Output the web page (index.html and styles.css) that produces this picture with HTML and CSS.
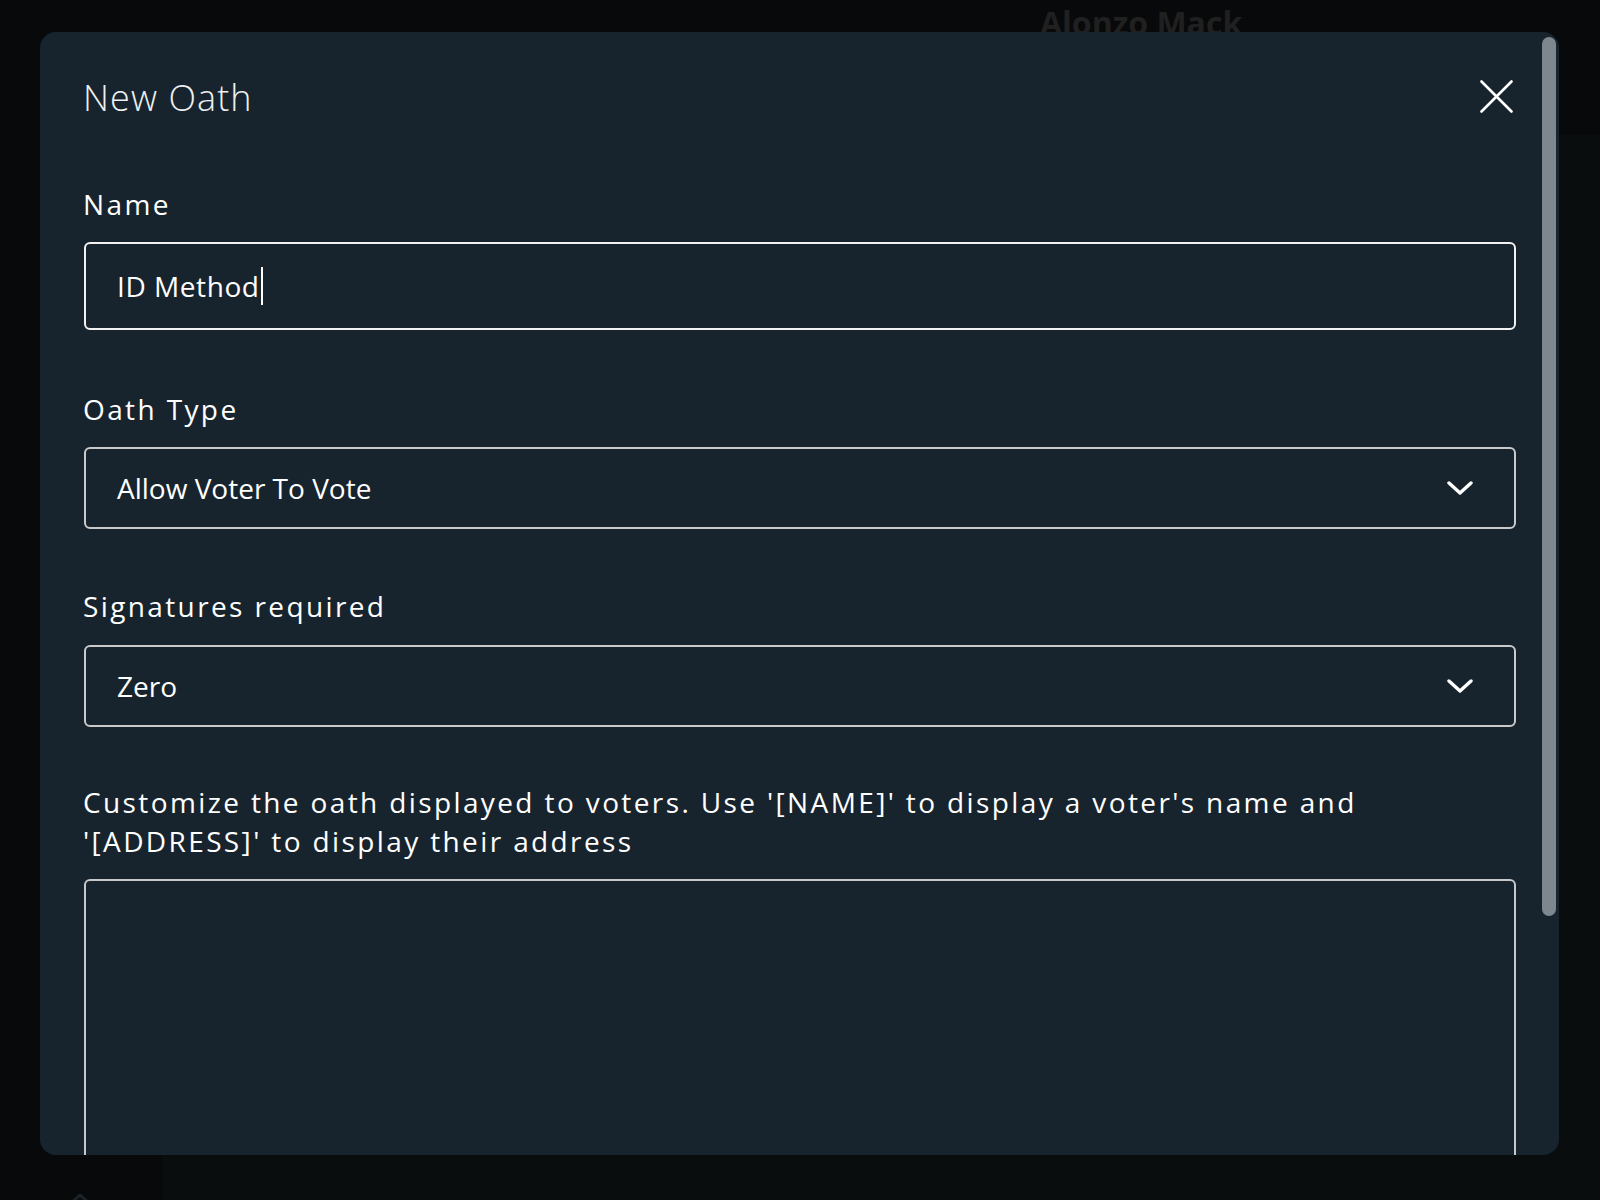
FILE: index.html
```html
<!DOCTYPE html>
<html lang="en">
<head>
<meta charset="utf-8">
<title>New Oath</title>
<link rel="stylesheet" href="styles.css">
</head>
<body>
<div class="app">
  <header class="topbar"><span class="user-name">Alonzo Mack</span></header>
  <div class="app-body">
    <aside class="sidebar">
      <svg class="side-icon" width="26" height="26" viewBox="0 0 26 26"><path d="M3 12 L13 3 L23 12 M6 10 V24 H20 V10" fill="none" stroke="#1a2327" stroke-width="3" stroke-linejoin="round"/></svg>
    </aside>
    <main class="main"></main>
  </div>
</div>

<div class="modal">
  <div class="modal-head">
    <h2 class="modal-title">New Oath</h2>
    <button class="close-btn" type="button" aria-label="Close">
      <svg width="33" height="33" viewBox="0 0 33 33"><path d="M1.5 1.5 L31.5 31.5 M31.5 1.5 L1.5 31.5" fill="none" stroke="#ffffff" stroke-width="2.6" stroke-linecap="round"/></svg>
    </button>
  </div>
  <form class="form">
    <div class="field field-name">
      <label class="field-label">Name</label>
      <div class="text-input"><span class="value">ID Method</span><span class="caret"></span></div>
    </div>
    <div class="field field-type">
      <label class="field-label">Oath Type</label>
      <div class="select"><span class="value">Allow Voter To Vote</span>
        <svg class="chevron" width="26" height="14" viewBox="0 0 26 14"><path d="M2 2 L13 12 L24 2" fill="none" stroke="#ffffff" stroke-width="3.4" stroke-linecap="round" stroke-linejoin="round"/></svg>
      </div>
    </div>
    <div class="field field-sig">
      <label class="field-label">Signatures required</label>
      <div class="select"><span class="value">Zero</span>
        <svg class="chevron" width="26" height="14" viewBox="0 0 26 14"><path d="M2 2 L13 12 L24 2" fill="none" stroke="#ffffff" stroke-width="3.4" stroke-linecap="round" stroke-linejoin="round"/></svg>
      </div>
    </div>
    <div class="field field-text">
      <label class="field-label">Customize the oath displayed to voters. Use '[NAME]' to display a voter's name and '[ADDRESS]' to display their address</label>
      <div class="textarea"></div>
    </div>
  </form>
  <div class="scroll-thumb"></div>
</div>
</body>
</html>
```

FILE: styles.css
```css
html, body {
  margin: 0;
  padding: 0;
}

body {
  width: 1600px;
  height: 1200px;
  overflow: hidden;
  background: #08090b;
  font-family: "Open Sans", "Noto Sans", sans-serif;
  position: relative;
}

.app {
  display: flex;
  flex-direction: column;
  height: 1200px;
}

.topbar {
  height: 135px;
  flex: none;
  background: #08090b;
  padding: 1px 0 0 1040px;
  box-sizing: border-box;
}

.user-name {
  font-size: 32px;
  font-weight: 700;
  line-height: 1.362;
  color: #202020;
}

.app-body {
  flex: 1;
  display: flex;
}

.sidebar {
  width: 163px;
  flex: none;
  background: #08090b;
  overflow: hidden;
  padding: 1057px 0 0 67px;
  box-sizing: border-box;
}

.side-icon {
  display: block;
}

.main {
  flex: 1;
  background: #0a0d0e;
}

.modal {
  position: absolute;
  left: 40px;
  top: 32px;
  width: 1519px;
  height: 1123px;
  box-sizing: border-box;
  padding: 41px 43px 0 44px;
  background: #18242d;
  border-radius: 16px;
  overflow: hidden;
  color: #ffffff;
}

.modal-head {
  display: flex;
  align-items: center;
  justify-content: space-between;
  height: 49px;
}

.modal-title {
  margin: 0 0 0 -1px;
  font-size: 36px;
  font-weight: 300;
  line-height: 49px;
  letter-spacing: 0.03em;
  color: #eef0f1;
}

.close-btn {
  background: none;
  border: 0;
  padding: 0;
  margin: -2px 3px 0 0;
  width: 33px;
  height: 33px;
  display: flex;
}

.form {
  margin-top: 63px;
}

.field {
  margin-bottom: 58px;
}

.field-name {
  margin-bottom: 60px;
}

.field-sig {
  margin-bottom: 56px;
}

.field-label {
  display: block;
  font-size: 28px;
  line-height: 1.4;
  letter-spacing: 0.085em;
  color: #ffffff;
  margin-bottom: 18px;
  margin-left: -1px;
}

.text-input,
.select,
.textarea {
  box-sizing: border-box;
  border-radius: 6px;
  font-size: 28px;
  color: #ffffff;
}

.text-input {
  height: 88px;
  border: 2px solid #f2f2f2;
  padding-left: 31px;
  display: flex;
  align-items: center;
  letter-spacing: 0.02em;
}

.caret {
  display: inline-block;
  width: 2px;
  height: 38px;
  background: #ffffff;
  margin-left: 2px;
}

.select {
  height: 82px;
  border: 2px solid #cacaca;
  padding: 0 41px 0 31px;
  display: flex;
  align-items: center;
  justify-content: space-between;
}

.chevron {
  display: block;
}

.textarea {
  height: 420px;
  border: 2px solid #c8c8c8;
}

.scroll-thumb {
  position: absolute;
  right: 3px;
  top: 5px;
  width: 14px;
  height: 879px;
  border-radius: 7px;
  background: #7e878e;
}
```
